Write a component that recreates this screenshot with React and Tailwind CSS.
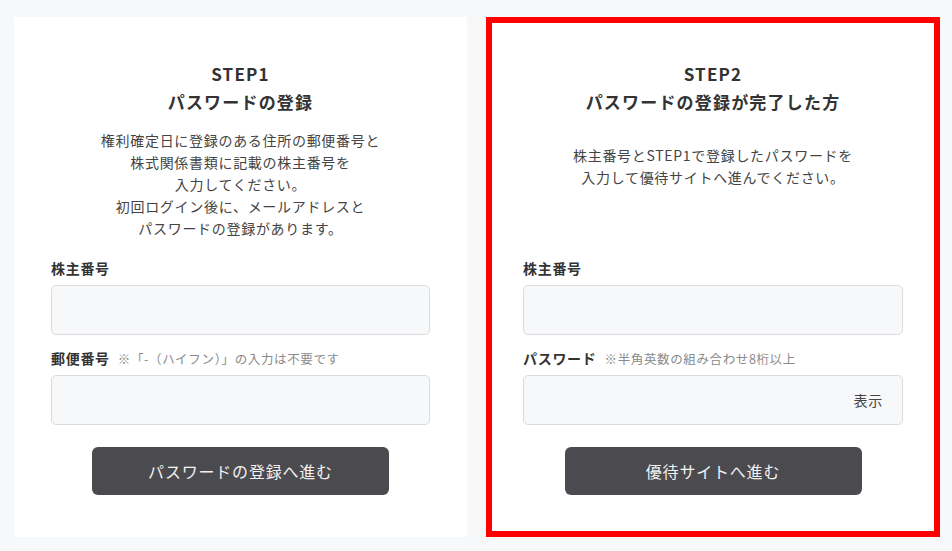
const FONT = { fontFamily: '"Noto Sans CJK JP", "Noto Sans", sans-serif' }

function Field({ label, note, trailing }) {
  return (
    <div>
      <div className="flex items-baseline h-[20px] leading-[20px]">
        <span className="text-[14px] font-bold text-[#333] tracking-[0.05em]">{label}</span>
        {note && (
          <span className="ml-[8px] text-[12.5px] text-[#8a8a8a] tracking-[0.05em]">{note}</span>
        )}
      </div>
      <div className="mt-[7px] h-[50px] rounded-[5px] border border-[#dcdcdf] bg-[#f7f8fa] flex items-center justify-end pr-[19px]">
        {trailing && <span className="text-[14px] text-[#444] tracking-[0.05em]">{trailing}</span>}
      </div>
    </div>
  )
}

function Card({ step, title, lines, descPad, fields, button, highlight }) {
  return (
    <div
      className={`h-[520px] bg-white border-[6px] px-[31px] pt-[37px] flex flex-col ${
        highlight ? 'border-[#ff0000]' : 'border-white'
      }`}
    >
      <div className="text-center text-[#333] font-bold text-[17px] leading-[28px] tracking-[0.07em]">
        <div>{step}</div>
        <div>{title}</div>
      </div>
      <div className={`h-[142px] ${descPad} text-center text-[14px] leading-[22px] text-[#444] tracking-[0.05em]`}>
        {lines.map((l) => (
          <div key={l}>{l}</div>
        ))}
      </div>
      <div className="flex flex-col gap-[13px]">
        {fields.map((f) => (
          <Field key={f.label} {...f} />
        ))}
      </div>
      <div className="mt-[22px] flex justify-center">
        <button className="w-[297px] h-[48px] rounded-[6px] bg-[#4b4a4f] text-[#f2f2f2] text-[16px] tracking-[0.05em]">
          {button}
        </button>
      </div>
    </div>
  )
}

export default function App() {
  return (
    <div className="w-[952px] h-[551px] bg-[#f7f8fa] flex pt-[17px] pl-[14px] gap-[19px]" style={FONT}>
      <div className="w-[453px]">
        <Card
          step="STEP1"
          title="パスワードの登録"
          descPad="pt-[13px]"
          lines={[
            '権利確定日に登録のある住所の郵便番号と',
            '株式関係書類に記載の株主番号を',
            '入力してください。',
            '初回ログイン後に、メールアドレスと',
            'パスワードの登録があります。',
          ]}
          fields={[
            { label: '株主番号' },
            { label: '郵便番号', note: '※「-（ハイフン）」の入力は不要です' },
          ]}
          button="パスワードの登録へ進む"
        />
      </div>
      <div className="w-[454px]">
        <Card
          highlight
          step="STEP2"
          title="パスワードの登録が完了した方"
          descPad="pt-[28px]"
          lines={['株主番号とSTEP1で登録したパスワードを', '入力して優待サイトへ進んでください。']}
          fields={[
            { label: '株主番号' },
            { label: 'パスワード', note: '※半角英数の組み合わせ8桁以上', trailing: '表示' },
          ]}
          button="優待サイトへ進む"
        />
      </div>
    </div>
  )
}
